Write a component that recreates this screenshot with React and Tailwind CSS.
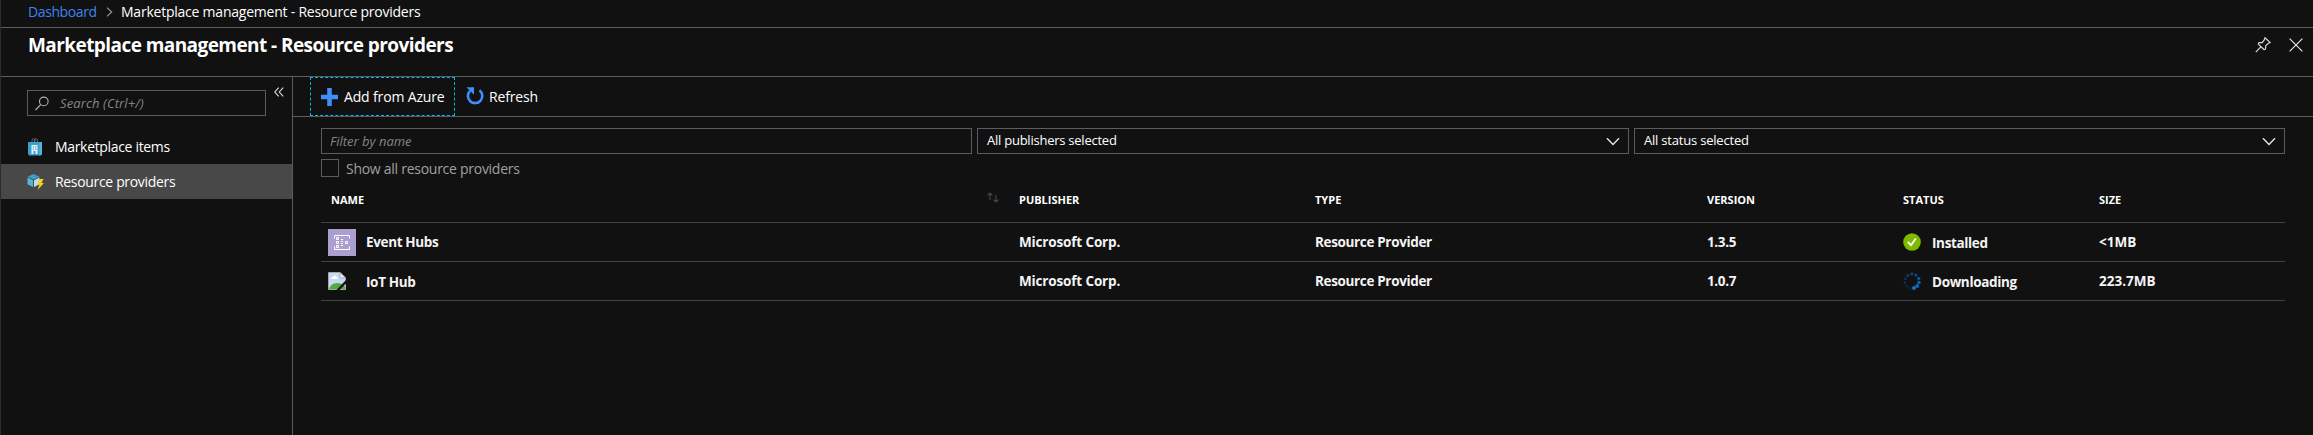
const LINE = 'border-[#5c5c5c]';

function Chevron() {
  return (
    <svg className="h-[9px] w-[14px] shrink-0" viewBox="0 0 14 9" fill="none" stroke="#e8e8e8" strokeWidth="1.4">
      <path d="M1 1.2 7 7.4 13 1.2" />
    </svg>
  );
}

function Search() {
  return (
    <svg className="h-[15px] w-[14px] shrink-0" viewBox="0 0 14 15" fill="none" stroke="#b4b4b4" strokeWidth="1.1">
      <circle cx="8.8" cy="5.4" r="4.3" />
      <path d="M5.7 8.6.5 14" />
    </svg>
  );
}

function BagIcon() {
  return (
    <svg className="h-[18px] w-[16px] shrink-0" viewBox="0 0 16 18">
      <path d="M5 5V2.4Q5 .8 6.5 .8T8 2.4V5M7.5 5V2.4Q7.5 .8 9 .8T10.5 2.4V5" fill="none" stroke="#6b6b6b" strokeWidth="1" />
      <path d="M1 4h14v12l-1 1.500H2L1 16z" fill="#3a9fcb" />
      <path d="M12.500 4H15v12l-2.500 1.500z" fill="#59b4d9" />
      <path d="M4.500 7h6v9h-2v-3h-2v3h-2z" fill="#e6f4fa" />
      <path d="M5.800 8.300h1.200v1.200H5.800zM8.200 8.300h1.200v1.200H8.200zM5.800 10.500h1.200v1.200H5.800zM8.200 10.500h1.200v1.200H8.200z" fill="#3a9fcb" />
    </svg>
  );
}

function CubeIcon() {
  return (
    <svg className="h-[18px] w-[18px] shrink-0" viewBox="0 0 18 18">
      <path d="M6.500 1 12.500 3.800 6.500 6.600.5 3.800z" fill="#3a9fcb" />
      <path d="M.5 4.600 6 7.200v6.800L.5 11.200z" fill="#59b4d9" />
      <path d="M7 7.200l5.500-2.600v6.600L7 14z" fill="#b9e0f0" />
      <path d="M12.500 6h4l-2 4H17l-6.500 7 2-5.500H10z" fill="#fcd116" />
    </svg>
  );
}

function EventHubsIcon() {
  return (
    <svg className="h-[27px] w-[28px] shrink-0" viewBox="0 0 28 27" fill="none" stroke="#fff" strokeWidth="1">
      <path d="M0 0h28v27H0z" fill="#ab9fd0" stroke="none" />
      <path d="M6.500 9.500v-3h15v3M6.500 17.500v3h15v-3" />
      <path d="M8.500 8.500h2v2h-2zM8.500 12.500h2v2h-2zM8.500 16.500h2v2h-2zM13 10.500h2M13 12.500h2M13 14.500h2M13 16.500h2M17.500 12.500h2v2h-2z" />
    </svg>
  );
}

function BrokenImage() {
  return (
    <svg className="h-[18px] w-[18px] shrink-0" viewBox="0 0 18 18">
      <path d="M.5.5H12L17.500 6v11.500H.5z" fill="#c6d9f5" stroke="#a5a5a5" />
      <path d="M3 7q0-2 2-2 .5-2 2-1.500T8.500 5Q10 5 10 7z" fill="#fff" />
      <path d="M1 17q2-6 8-6 5 0 8 4v2z" fill="#55a83a" />
      <path d="M12 .5V6h5.500z" fill="#f4f4f4" stroke="#a5a5a5" />
      <path d="M18 8v3.500L11.500 18H8.500z" fill="#111" />
    </svg>
  );
}

function CheckIcon() {
  return (
    <svg className="h-[18px] w-[18px] shrink-0" viewBox="0 0 18 18">
      <circle cx="9" cy="9" r="8.800" fill="#7fba00" />
      <path d="M4.800 9 8 12.200 12.800 5.500" fill="none" stroke="#fff" strokeWidth="1.800" />
    </svg>
  );
}

function Spinner() {
  return (
    <svg className="h-[18px] w-[18px] shrink-0" viewBox="0 0 18 18">
      <circle cx="9" cy="1.800" r="1.600" fill="#0a4476" />
      <circle cx="12.900" cy="3" r="1.600" fill="#0a4c85" />
      <circle cx="15.700" cy="6.500" r="1.700" fill="#0a5596" />
      <circle cx="16" cy="10.500" r="1.800" fill="#0a60a9" />
      <circle cx="14.200" cy="14" r="1.900" fill="#0a6abf" />
      <circle cx="11" cy="16" r="1.900" fill="#0a78d4" />
      <circle cx="7" cy="16" r="1.500" fill="#10202e" />
      <circle cx="3.800" cy="14" r="1.500" fill="#10253a" />
      <circle cx="1.900" cy="10.700" r="1.500" fill="#0f2b45" />
      <circle cx="2.200" cy="6.700" r="1.500" fill="#0e3151" />
      <circle cx="4.900" cy="3.400" r="1.600" fill="#0c3b66" />
    </svg>
  );
}

function Row({ icon, name, nameClass, version, statusIcon, status, size }) {
  return (
    <div className="grid h-[39px] grid-cols-[698px_296px_392px_196px_196px_1fr] items-center border-b border-[#434343] text-[13.5px] leading-[20px] font-bold tracking-[-0.35px] text-[#f4f4f4]">
      <div className="flex items-center pl-[7px]">
        <div className="w-[38px]">{icon}</div>
        <span className={nameClass}>{name}</span>
      </div>
      <div className="tracking-[-0.15px]">Microsoft Corp.</div>
      <div>Resource Provider</div>
      <div>{version}</div>
      <div className="flex items-center gap-[11px]">
        {statusIcon}
        <span className="pt-[2px]">{status}</span>
      </div>
      <div className="tracking-[0px]">{size}</div>
    </div>
  );
}

export default function App() {
  return (
    <div className="flex h-[435px] w-[2313px] flex-col overflow-hidden border-l border-[#2c2c2c] bg-[#111111] font-['Open_Sans',sans-serif] text-white">
      <nav className={`flex h-[28px] shrink-0 items-center border-b ${LINE} pb-[3px] pl-[27px] text-[14px] leading-[20px]`}>
        <span className="w-[78px] tracking-[-0.4px] text-[#3f83f0]">Dashboard</span>
        <svg className="mr-[8px] h-[10px] w-[7px]" viewBox="0 0 7 10" fill="none" stroke="#9a9a9a" strokeWidth="1.100">
          <path d="M1 .7 5.700 5 1 9.300" />
        </svg>
        <span className="tracking-[-0.23px]">Marketplace management - Resource providers</span>
      </nav>
      <header className={`flex h-[49px] shrink-0 items-start justify-between border-b ${LINE} pl-[27px]`}>
        <h1 className="pt-[3px] text-[19px] leading-[28px] font-bold tracking-[-0.57px]">Marketplace management - Resource providers</h1>
        <div className="flex gap-[18px] pt-[9px] pr-[10px]">
          <svg className="h-[16px] w-[16px]" viewBox="0 0 16 16" fill="none" stroke="#d8d8d8" strokeWidth="1.200">
            <path d="M10 .8 15.200 5.500 13.500 6.200 10.800 8.600 10.400 12.300 9 12.500 3.300 7.200 4 5.600 7.300 5.700 9.400 2.700zM5.600 10.200.8 15.200" />
          </svg>
          <svg className="h-[16px] w-[14px]" viewBox="0 0 14 16" fill="none" stroke="#e4e4e4" strokeWidth="1.200">
            <path d="M.6 1.600 13.400 14.400M13.400 1.600.6 14.400" />
          </svg>
        </div>
      </header>
      <div className="flex min-h-0 flex-1">
        <aside className={`w-[292px] shrink-0 border-r ${LINE}`}>
          <div className="flex h-[52px] items-start pt-[13px] pl-[26px]">
            <div className={`flex h-[26px] w-[239px] items-center gap-[11px] border ${LINE} pl-[7px] text-[13px] text-[#858585] italic`}>
              <Search />
              <span className="pt-[1px] tracking-[0.12px]">Search (Ctrl+/)</span>
            </div>
            <svg className="mt-[-3px] ml-[8px] h-[10px] w-[10px]" viewBox="0 0 10 10" fill="none" stroke="#e0e0e0" strokeWidth="1.100">
              <path d="M4.700.7.8 5l3.900 4.300M9.200.7 5.300 5l3.900 4.300" />
            </svg>
          </div>
          <ul className="text-[14px] leading-[20px] tracking-[-0.33px]">
            <li className="flex h-[35px] items-center gap-[12px] pl-[26px]">
              <BagIcon />
              <span className="pt-[1px]">Marketplace items</span>
            </li>
            <li className="flex h-[35px] items-center gap-[10px] bg-[#484848] pl-[26px]">
              <CubeIcon />
              <span className="pt-[1px]">Resource providers</span>
            </li>
          </ul>
        </aside>
        <main className="min-w-0 flex-1">
          <div className={`flex h-[40px] items-start border-b ${LINE} pl-[17px] text-[14px] leading-[20px] tracking-[-0.15px]`}>
            <button className="flex h-[39px] w-[145px] items-center gap-[6px] border border-dashed border-[#00b7f0] pl-[10px]">
              <svg className="h-[18px] w-[17px] shrink-0" viewBox="0 0 17 18" fill="#3f8efc">
                <path d="M6.200 0h4.600v6.700H17v4.600h-6.200V18H6.200v-6.700H0V6.700h6.200z" />
              </svg>
              <span className="pt-[1px] whitespace-nowrap">Add from Azure</span>
            </button>
            <button className="flex h-[39px] items-center gap-[5px] pl-[11px]">
              <svg className="mb-[2px] h-[18px] w-[18px] shrink-0" viewBox="0 0 18 18">
                <path d="M13.500 3.200A7.200 7.200 0 1 1 4 3.800" fill="none" stroke="#3f8efc" strokeWidth="2.600" />
                <path d="M.5.200H8v7.500z" fill="#3f8efc" />
              </svg>
              <span className="pt-[1px]">Refresh</span>
            </button>
          </div>
          <div className="px-[28px] pt-[11px]">
            <div className="grid h-[26px] w-[1964px] grid-cols-[651px_652px_651px] gap-[5px] text-[13px] leading-[18px]">
              <div className={`flex items-center border ${LINE} pb-[1px] pl-[8px] text-[#858585] italic`}>Filter by name</div>
              <div className={`flex items-center justify-between border ${LINE} pr-[8px] pl-[9px]`}>
                <span className="pb-[2px] tracking-[-0.24px]">All publishers selected</span>
                <Chevron />
              </div>
              <div className={`flex items-center justify-between border ${LINE} pr-[8px] pl-[9px]`}>
                <span className="pb-[2px] tracking-[-0.2px]">All status selected</span>
                <Chevron />
              </div>
            </div>
            <label className="mt-[4px] flex h-[20px] items-center gap-[7px] text-[14px] leading-[20px] tracking-[-0.27px] text-[#a0a0a0]">
              <span className={`h-[18px] w-[18px] border ${LINE}`} />
              <span className="pt-[2px]">Show all resource providers</span>
            </label>
            <div className="w-[1964px]">
              <div className="grid h-[45px] grid-cols-[698px_296px_392px_196px_196px_1fr] items-center border-b border-[#434343] text-[11px] leading-[16px] font-bold">
                <div className="flex justify-between pr-[20px] pl-[10px]">
                  <span>NAME</span>
                  <svg className="h-[11px] w-[12px]" viewBox="0 0 12 11" fill="none" stroke="#484848" strokeWidth="1.100">
                    <path d="M3 8V1M.6 3.400 3 1l2.400 2.400M9 3v7M6.600 7.600 9 10l2.400-2.400" />
                  </svg>
                </div>
                <div>PUBLISHER</div>
                <div>TYPE</div>
                <div>VERSION</div>
                <div>STATUS</div>
                <div>SIZE</div>
              </div>
              <Row icon={<EventHubsIcon />} name="Event Hubs" nameClass="" version="1.3.5" statusIcon={<CheckIcon />} status="Installed" size="<1MB" />
              <Row icon={<BrokenImage />} name="IoT Hub" nameClass="pt-[2px]" version="1.0.7" statusIcon={<Spinner />} status="Downloading" size="223.7MB" />
            </div>
          </div>
        </main>
      </div>
    </div>
  );
}
